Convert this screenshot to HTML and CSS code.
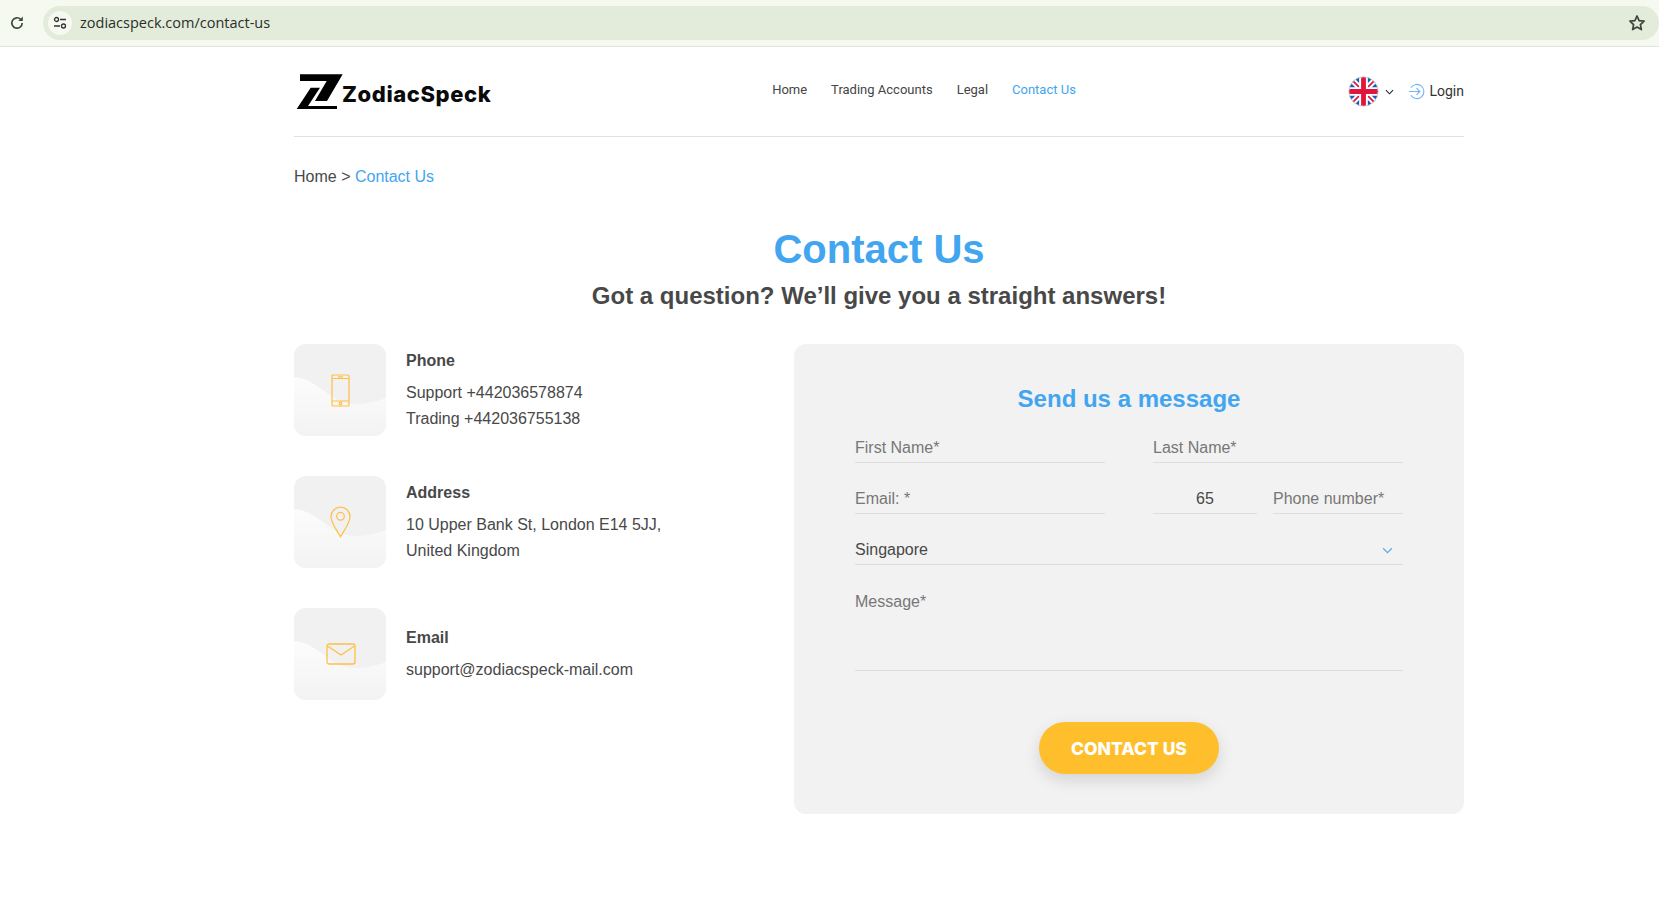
FILE: index.html
```html
<!DOCTYPE html>
<html lang="en">
<head>
<meta charset="utf-8">
<title>Contact Us - ZodiacSpeck</title>
<link rel="stylesheet" href="styles.css">
</head>
<body>
<svg class="defs" width="0" height="0" aria-hidden="true"><defs><linearGradient id="wavefill" x1="0" y1="0" x2="0" y2="1"><stop offset="0" stop-color="#fcfcfc"/><stop offset="1" stop-color="#f3f3f3"/></linearGradient></defs></svg>
<div class="chrome">
  <svg class="reload" viewBox="0 0 16 16" width="16" height="16"><path d="M13.200 8a5.200 5.200 0 1 1-1.500-3.700" fill="none" stroke="#3f4a3f" stroke-width="1.700"/><path d="M13.800 1.500v4.500h-4.500z" fill="#3f4a3f"/></svg>
  <div class="omnibox">
    <span class="tune"><svg viewBox="0 0 14 14" width="14" height="14"><circle cx="3.500" cy="3.500" r="2" fill="none" stroke="#333" stroke-width="1.300"/><path d="M7 3.500h6M1 10h6" stroke="#333" stroke-width="1.400"/><circle cx="10.500" cy="10" r="2" fill="none" stroke="#333" stroke-width="1.300"/></svg></span>
    <span class="url">zodiacspeck.com/contact-us</span>
    <svg class="star" viewBox="0 0 18 18" width="18" height="18"><path d="M9 2l2.100 4.600 5 .6-3.700 3.400 1 5L9 13.100l-4.400 2.500 1-5L1.900 7.200l5-.6z" fill="none" stroke="#3c443c" stroke-width="1.700" stroke-linejoin="round"/></svg>
  </div>
</div>
<div class="container">
  <header class="site-header">
    <a class="logo">
      <svg viewBox="0 0 47 36" width="47" height="36"><path d="M4 0.300H46.700L31 27H19L30.700 7H4z" fill="#000"/><path d="M14.700 13.700H24L12 32H41V35H0.700z" fill="#000"/></svg>
      <span class="logo-text">ZodiacSpeck</span>
    </a>
    <nav class="nav">
      <a>Home</a><a>Trading Accounts</a><a>Legal</a><a class="active">Contact Us</a>
    </nav>
    <div class="tools">
      <svg class="flag" viewBox="0 0 32 32" width="31" height="31">
        <defs><clipPath id="c"><circle cx="16" cy="16" r="15"/></clipPath></defs>
        <g clip-path="url(#c)">
          <rect width="32" height="32" fill="#1a5bb5"/>
          <path d="M0 0L32 32M32 0L0 32" stroke="#fff" stroke-width="6"/>
          <path d="M0 0L32 32M32 0L0 32" stroke="#e0173c" stroke-width="1.800"/>
          <path d="M16 0V32M0 16H32" stroke="#fff" stroke-width="9"/>
          <path d="M16 0V32M0 16H32" stroke="#e0173c" stroke-width="5"/>
        </g>
        <circle cx="16" cy="16" r="15.200" fill="none" stroke="#ccc" stroke-width="1"/>
      </svg>
      <svg class="caret" viewBox="0 0 10 6" width="9" height="6"><path d="M1 1l4 4 4-4" fill="none" stroke="#222" stroke-width="1.200"/></svg>
      <a class="login">
        <svg viewBox="0 0 18 18" width="17" height="17"><path d="M3 5a7.500 7.500 0 1 1 0 8" fill="none" stroke="#74b4f5" stroke-width="1.200"/><path d="M1 9h11M9 5.500L12.500 9 9 12.500" fill="none" stroke="#74b4f5" stroke-width="1.200"/></svg>
        <span>Login</span>
      </a>
    </div>
  </header>

  <div class="crumbs">Home &gt; <span class="blue">Contact Us</span></div>

  <h1 class="title">Contact Us</h1>
  <h2 class="subtitle">Got a question? We’ll give you a straight answers!</h2>

  <div class="columns">
    <section class="info">
      <div class="info-row">
        <div class="tile">
          <svg class="wave" viewBox="0 0 92 92" preserveAspectRatio="none"><path d="M0 33C14 33 28 46 40 54S70 62 92 54V92H0z" fill="url(#wavefill)"/></svg>
          <svg class="glyph" viewBox="0 0 19 33" width="19" height="33"><g fill="none" stroke="#ffbf47" stroke-width="1.200"><rect x="1" y="1" width="17" height="31" rx="1"/><path d="M1 4.500h17M1 27h17M7 2.800h5"/><circle cx="9.500" cy="29.500" r="1.300"/></g></svg>
        </div>
        <div class="info-text">
          <h3>Phone</h3>
          <p>Support +442036578874</p>
          <p>Trading +442036755138</p>
        </div>
      </div>
      <div class="info-row">
        <div class="tile">
          <svg class="wave" viewBox="0 0 92 92" preserveAspectRatio="none"><path d="M0 33C14 33 28 46 40 54S70 62 92 54V92H0z" fill="url(#wavefill)"/></svg>
          <svg class="glyph" viewBox="0 0 22 33" width="21" height="32"><g fill="none" stroke="#ffbf47" stroke-width="1.300"><path d="M11 32C7 25 1 17 1 11a10 10 0 0 1 20 0c0 6-6 14-10 21z"/><circle cx="11" cy="10.500" r="4"/></g></svg>
        </div>
        <div class="info-text">
          <h3>Address</h3>
          <p>10 Upper Bank St, London E14 5JJ,</p>
          <p>United Kingdom</p>
        </div>
      </div>
      <div class="info-row center">
        <div class="tile">
          <svg class="wave" viewBox="0 0 92 92" preserveAspectRatio="none"><path d="M0 33C14 33 28 46 40 54S70 62 92 54V92H0z" fill="url(#wavefill)"/></svg>
          <svg class="glyph" viewBox="0 0 30 22" width="30" height="22"><g fill="none" stroke="#ffbf47" stroke-width="1.300"><rect x="1" y="1" width="28" height="20" rx="2"/><path d="M1.500 3L15 12 28.500 3"/></g></svg>
        </div>
        <div class="info-text">
          <h3>Email</h3>
          <p>support@zodiacspeck-mail.com</p>
        </div>
      </div>
    </section>

    <form class="panel">
      <h2 class="panel-title">Send us a message</h2>
      <div class="field-grid">
        <input class="field" placeholder="First Name*">
        <input class="field" placeholder="Last Name*">
        <input class="field" placeholder="Email: *">
        <div class="phone">
          <input class="field code" value="65">
          <input class="field" placeholder="Phone number*">
        </div>
        <div class="select wide">
          <span>Singapore</span>
          <svg viewBox="0 0 10 6" width="11" height="7"><path d="M1 1l4 4 4-4" fill="none" stroke="#5aa9ee" stroke-width="1.100"/></svg>
        </div>
        <textarea class="field message wide" placeholder="Message*"></textarea>
      </div>
      <div class="actions"><button type="button" class="submit">CONTACT US</button></div>
    </form>
  </div>
</div>
</body>
</html>
```
FILE: styles.css
```css
* { box-sizing: border-box; }
html, body { margin: 0; padding: 0; background: #fff; }
body { font-family: "Liberation Sans", Arial, sans-serif; color: #484848; overflow: hidden; height: 904px; }
h1, h2, h3, p { margin: 0; }
.defs { display: block; height: 0; }

.chrome { height: 47px; background: #f6f9f0; border-bottom: 1px solid #e2e4dc; display: flex; align-items: center; padding: 0 0 1px 9px; gap: 18px; }
.reload { flex: none; }
.omnibox { flex: 1; height: 34px; background: #e3ebda; border-radius: 17px; display: flex; align-items: center; padding: 0 13px 0 5px; }
.tune { width: 24px; height: 24px; border-radius: 50%; background: #f6f9f0; display: flex; align-items: center; justify-content: center; }
.url { font: 14.500px "Open Sans", sans-serif; color: #2a2f2a; margin-left: 8px; flex: 1; }

.container { width: 1170px; margin-left: 294px; }
.site-header { height: 90px; border-bottom: 1px solid #e1e1e1; display: grid; grid-template-columns: 1fr auto 1fr; align-items: center; }
.logo { display: flex; align-items: flex-end; margin-left: 2px; }
.logo-text { font: 800 22px "Inter", sans-serif; color: #0a0a0a; letter-spacing: .6px; margin-left: -1px; margin-bottom: 3px; }
.nav { display: flex; gap: 24px; margin: 0 0 4px 90px; }
.nav a { font: 13px "Roboto", sans-serif; color: #444; }
.nav a.active { color: #42a5f0; }
.tools { display: flex; align-items: center; justify-content: flex-end; }
.caret { margin-left: 6px; margin-right: 14px; }
.login { display: flex; align-items: center; gap: 4px; font: 14px "Roboto", sans-serif; color: #333; margin-bottom: 1px; }

.crumbs { margin-top: 30px; font-size: 16px; line-height: 20px; }
.blue { color: #42a5f0; }

.title { margin-top: 37px; text-align: center; font-size: 40px; line-height: 50px; font-weight: 700; color: #42a5f0; }
.subtitle { margin-top: 6px; text-align: center; font-size: 24px; line-height: 32px; font-weight: 700; color: #484848; }

.columns { margin-top: 32px; display: grid; grid-template-columns: 1fr 670px; align-items: start; }
.info { display: flex; flex-direction: column; gap: 40px; }
.info-row { display: flex; gap: 20px; }
.info-row.center { align-items: center; }
.tile { position: relative; width: 92px; height: 92px; flex: none; border-radius: 12px; background: #f1f1f1; overflow: hidden; display: flex; align-items: center; justify-content: center; }
.wave { position: absolute; left: 0; top: 0; width: 100%; height: 100%; }
.glyph { position: relative; margin-left: 1px; }
.info-text h3 { font-size: 16px; line-height: 20px; font-weight: 700; margin: 7px 0 9px; }
.info-text p { font-size: 16px; line-height: 26px; }
.info-row.center .info-text { padding-top: 3px; }
.info-row.center .info-text h3 { margin-top: 0; }

.panel { height: 470px; background: #f2f2f2; border-radius: 12px; padding: 40px 61px 0; }
.panel-title { text-align: center; font-size: 24px; line-height: 30px; font-weight: 700; color: #42a5f0; }
.field-grid { margin-top: 18px; display: grid; grid-template-columns: 250px 250px; column-gap: 48px; row-gap: 20px; }
.wide { grid-column: 1 / -1; }
.field { display: block; width: 100%; height: 31px; border: 0; border-bottom: 1px solid #ddd; background: transparent; font: 16px "Liberation Sans", sans-serif; color: #484848; padding: 2px 0 0; outline: 0; border-radius: 0; }
.field::placeholder { color: #777; opacity: 1; }
.phone { display: grid; grid-template-columns: 104px 130px; column-gap: 16px; }
.code { text-align: center; }
.select { height: 31px; border-bottom: 1px solid #ddd; display: flex; justify-content: space-between; align-items: center; padding: 2px 10px 0 0; font-size: 16px; color: #484848; }
.message { height: 86px; padding-top: 8px; resize: none; }
.actions { margin-top: 51px; display: flex; justify-content: center; }
.submit { width: 180px; height: 52px; border: 0; border-radius: 26px; background: #ffbf2d; color: #fff; font: 800 17.500px "Inter", sans-serif; box-shadow: 0 6px 16px rgba(0,0,0,.13); }
```
